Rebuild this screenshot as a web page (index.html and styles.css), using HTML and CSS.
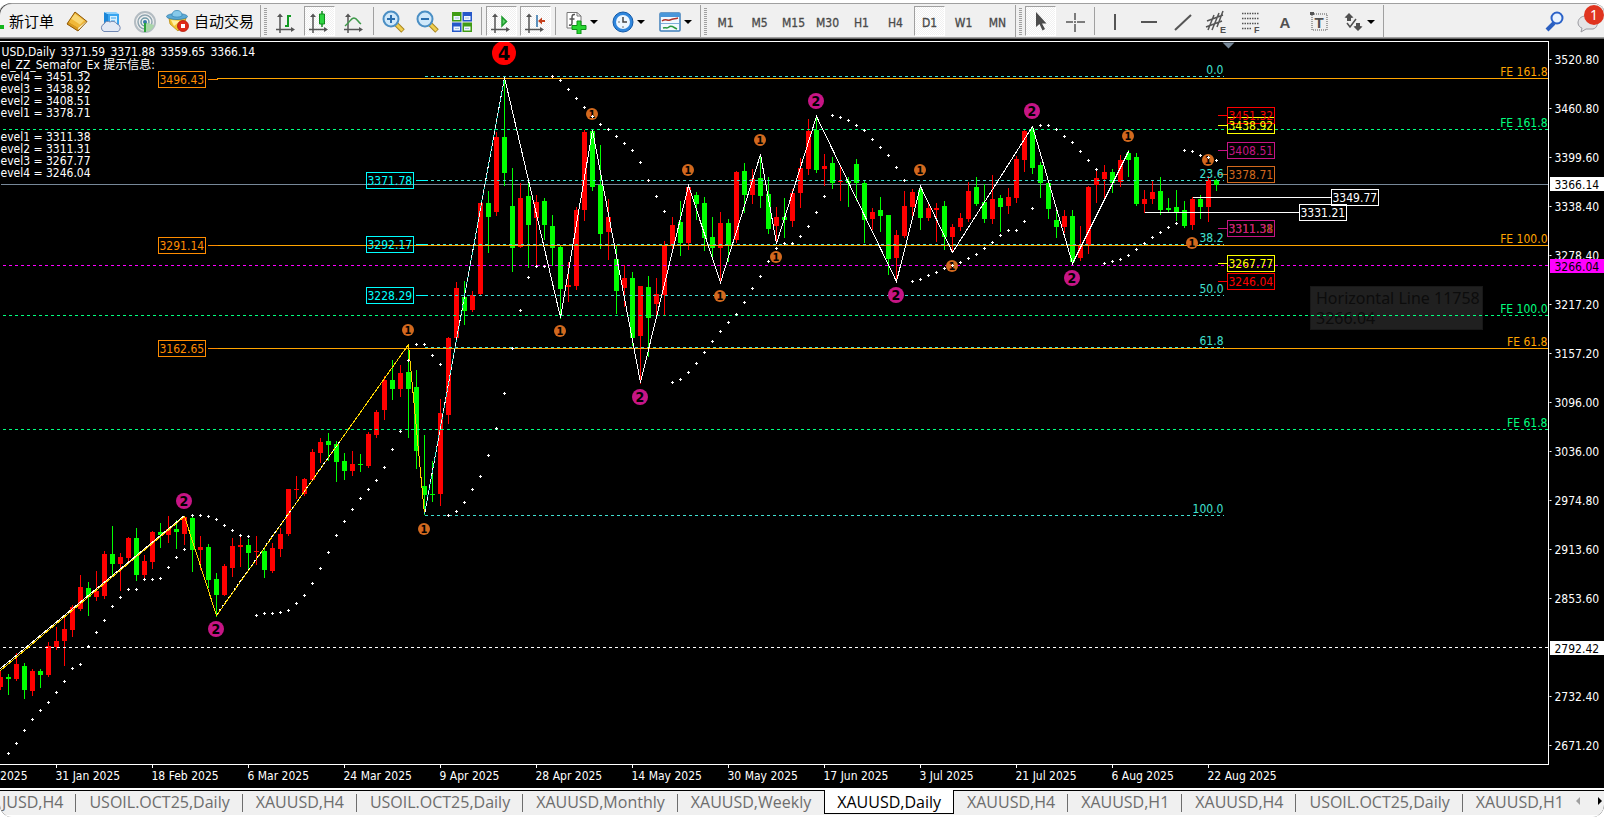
FILE: index.html
```html
<!DOCTYPE html>
<html lang="zh-CN">
<head>
<meta charset="utf-8">
<title>XAUUSD,Daily</title>
<link rel="stylesheet" href="styles.css">
</head>
<body>
<div class="app">
<header class="toolbar">
  <div class="group">
    <button class="tool neworder"><span class="plus"></span>新订单</button>
    <button class="tool" aria-label="Market watch"><svg class="ico" viewBox="0 0 24 24"><path d="M10 2 22 11.500 13 21 2 14Z" fill="#b97a12"/><path d="M10 2 21 11 13 18 3 12Z" fill="#f0b83a"/><path d="M10 4 19 10.500 15 14.500 6 8.500Z" fill="#f9d774"/><path d="M3 12 13 18 13 21 2 14Z" fill="#d99a1e"/><path d="M13 18 21 11.500 22 12.500 13.500 20Z" fill="#fff4c8"/><path d="M10 2 22 11.500 13 21 2 14Z" fill="none" stroke="#8f5a0b"/></svg></button>
    <button class="tool" aria-label="Cloud"><svg class="ico" viewBox="0 0 24 24"><path d="M5 2 9 4V15H5Z" fill="#1a86d8"/><path d="M5 2H17L20 4H9Z" fill="#8fd0fb"/><path d="M9 4H20V15H9Z" fill="#37a4ef"/><path d="M11 6H18V13H11Z" fill="#d7effd"/><path d="M12 8H17M12 11H16" stroke="#37a4ef"/><path d="M5 21.500a4 4 0 0 1 0-7.500 4 4 0 0 1 6-2 5 5 0 0 1 7 2 4 4 0 0 1 1 7.500Z" fill="#e3e9f4" stroke="#7188b3"/></svg></button>
    <button class="tool" aria-label="Signals"><svg class="ico" viewBox="0 0 24 24" fill="none"><circle cx="12" cy="12" r="10" stroke="#b3bcc2" stroke-width="2"/><circle cx="12" cy="12" r="7" stroke="#8fa5b0" stroke-width="1.500"/><circle cx="12" cy="12" r="4" stroke="#6f9aa8" stroke-width="1.500"/><path d="M12 12V22C17 21 20 19 21 15Z" fill="#a9d6a9"/><circle cx="12" cy="12" r="2" fill="#3479a8"/><path d="M12 13V22" stroke="#2ba33a" stroke-width="2"/></svg></button>
    <button class="tool auto"><svg class="ico" viewBox="0 0 24 24"><path d="M3 9H20L18 16 12 22 4 15Z" fill="#f2c531" stroke="#b98d10" stroke-width=".8"/><path d="M5 11 14 12 8 17Z" fill="#fff0a0"/><ellipse cx="11" cy="7.500" rx="10.500" ry="3" fill="#5caad6" stroke="#2f7dad" stroke-width=".8"/><path d="M6 7C6 3 8 1.500 11 1.500S16 3 16 7C14 8.500 8 8.500 6 7Z" fill="#86c9ea" stroke="#3a89b7" stroke-width=".8"/><circle cx="17" cy="17" r="5.500" fill="#df2a17" stroke="#b31d0e" stroke-width=".8"/><rect x="15" y="15" width="4" height="4" fill="#fff"/></svg>自动交易</button>
  </div>
  <div class="group">
    <i class="grip"></i>
    <button class="tool" aria-label="Bar chart"><svg class="ico" viewBox="0 0 24 24" fill="none"><path d="M6 5V23M2 19.500H19" stroke="#555" stroke-width="1.500"/><path d="M3 7 6 3.500 9 7ZM17 17 21 19.500 17 22Z" fill="#555"/><path d="M14 5V17M14 6H17M11 16H14" stroke="#119a22" stroke-width="2"/></svg></button>
    <button class="tool pressed" aria-label="Candlesticks"><svg class="ico" viewBox="0 0 24 24" fill="none"><path d="M5 5V23M1 19.500H18" stroke="#555" stroke-width="1.500"/><path d="M2 7 5 3.500 8 7ZM16 17 20 19.500 16 22Z" fill="#555"/><path d="M14 1V17" stroke="#118a1e" stroke-width="1.500"/><path d="M11.500 4H16.500V14H11.500Z" fill="#2fd541" stroke="#118a1e"/></svg></button>
    <button class="tool" aria-label="Line chart"><svg class="ico" viewBox="0 0 24 24" fill="none"><path d="M6 5V23M2 19.500H19" stroke="#555" stroke-width="1.500"/><path d="M3 7 6 3.500 9 7ZM17 17 21 19.500 17 22Z" fill="#555"/><path d="M3 16C8 12 9 8 12 8S16 12 19 14" stroke="#3f9a4a" stroke-width="1.500"/></svg></button>
    <i class="sep"></i>
    <button class="tool" aria-label="Zoom in"><svg class="ico" viewBox="0 0 24 24"><path d="M14 14 21 21" stroke="#a8841c" stroke-width="5"/><path d="M14 14 20.500 20.500" stroke="#f0cf50" stroke-width="3"/><circle cx="9" cy="9" r="7.500" fill="#cfe8fa" stroke="#4b8fc4" stroke-width="2"/><path d="M5 9H13M9 5V13" stroke="#2b6fae" stroke-width="2"/></svg></button>
    <button class="tool" aria-label="Zoom out"><svg class="ico" viewBox="0 0 24 24"><path d="M14 14 21 21" stroke="#a8841c" stroke-width="5"/><path d="M14 14 20.500 20.500" stroke="#f0cf50" stroke-width="3"/><circle cx="9" cy="9" r="7.500" fill="#cfe8fa" stroke="#4b8fc4" stroke-width="2"/><path d="M5 9H13" stroke="#2b6fae" stroke-width="2"/></svg></button>
    <i hidden></i>
    <button class="tool" aria-label="Tile windows"><svg class="ico" viewBox="0 0 24 24"><path d="M2 2H11.500V11.500H2ZM12.500 12.500H22V22H12.500Z" fill="#3f9c14"/><path d="M12.500 2H22V11.500H12.500ZM2 12.500H11.500V22H2Z" fill="#2558c9"/><path d="M3.500 6H10V10H3.500ZM14 6H20.500V10H14ZM3.500 16.500H10V20.500H3.500ZM14 16.500H20.500V20.500H14Z" fill="#eef5ff"/><path d="M5 8H9M15 8H19M5 18.500H9M15 18.500H19" stroke="#a9c4dd"/></svg></button>
    <i class="sep"></i>
    <button class="tool pressed" aria-label="Auto scroll"><svg class="ico" viewBox="0 0 24 24" fill="none"><path d="M5 5V23M1 19.500H18" stroke="#555" stroke-width="1.500"/><path d="M2 7 5 3.500 8 7ZM16 17 20 19.500 16 22Z" fill="#555"/><path d="M12 7 16.500 11.500 12 16Z" fill="#5fd36a" stroke="#1d9a2c" stroke-width="1.500"/></svg></button>
    <button class="tool pressed" aria-label="Chart shift"><svg class="ico" viewBox="0 0 24 24" fill="none"><path d="M5 5V23M1 19.500H18" stroke="#555" stroke-width="1.500"/><path d="M2 7 5 3.500 8 7ZM16 17 20 19.500 16 22Z" fill="#555"/><path d="M13 5V17" stroke="#2a6fa8" stroke-width="1.500"/><path d="M14 11 18 7.500V10H21V12H18V14.500Z" fill="#c5401c"/></svg></button>
    <i class="sep"></i>
    <button class="tool drop" aria-label="Indicators"><svg class="ico" viewBox="0 0 24 24"><path d="M3 2.500H13L17 6V18H3Z" fill="#fff" stroke="#777"/><path d="M13 2.500V6H17" fill="none" stroke="#777"/><path d="M11 4.500C8 4 8 6 8 8V13C8 15 7 15.500 5 15M5.500 9H10.500" fill="none" stroke="#555" stroke-width="1.500"/><path d="M13 11H17V15.500H22V19.500H17V24H13V19.500H8V15.500H13Z" fill="#27d631" stroke="#0d8f16"/></svg><span class="caret"></span></button>
    <button class="tool drop" aria-label="Periods"><svg class="ico" viewBox="0 0 24 24"><circle cx="12" cy="12" r="10" fill="#2f86dd" stroke="#135aa8"/><circle cx="12" cy="12" r="7" fill="#eef7ff"/><path d="M12 7V12H16" fill="none" stroke="#444" stroke-width="1.500"/><path d="M7 12H9M12 16V18" stroke="#777"/></svg><span class="caret"></span></button>
    <button class="tool drop" aria-label="Templates"><svg class="ico" viewBox="0 0 24 24"><rect x="2" y="3" width="20" height="18" rx="1" fill="#f3f9ff" stroke="#3f7fba" stroke-width="1.500"/><path d="M2 3H22V7H2Z" fill="#4a97da"/><path d="M4 11C8 8 9 11 12 10S16 9 20 8" fill="none" stroke="#b1332a" stroke-width="1.500"/><path d="M3 13.500H21" stroke="#7fb0da"/><path d="M5 18C8 17 9 19 11 17S15 17 19 19" fill="none" stroke="#2a9a3f" stroke-width="1.500"/></svg><span class="caret"></span></button>
  </div>
  <div class="group">
    <i class="grip"></i>
    <button class="tool tf">M1</button><button class="tool tf">M5</button><button class="tool tf">M15</button><button class="tool tf">M30</button><button class="tool tf">H1</button><button class="tool tf">H4</button><button class="tool tf pressed">D1</button><button class="tool tf">W1</button><button class="tool tf">MN</button>
  </div>
  <div class="group">
    <i class="grip"></i>
    <button class="tool pressed" aria-label="Cursor"><svg class="ico" viewBox="0 0 24 24"><path d="M7 2V17L10.500 14 13.500 20.500 16 19 13 13.500H17.500Z" fill="#4c4c4c"/></svg></button>
    <button class="tool" aria-label="Crosshair"><svg class="ico" viewBox="0 0 24 24"><path d="M12 3V10M12 14V22M3 12H10M14 12H22M11 12H13" stroke="#555" stroke-width="1.500"/></svg></button>
    <i class="sep"></i>
    <button class="tool" aria-label="Vertical line"><svg class="ico" viewBox="0 0 24 24"><path d="M12 4V20" stroke="#555" stroke-width="2"/></svg></button>
    <button class="tool" aria-label="Horizontal line"><svg class="ico" viewBox="0 0 24 24"><path d="M4 12H20" stroke="#555" stroke-width="2"/></svg></button>
    <button class="tool" aria-label="Trend line"><svg class="ico" viewBox="0 0 24 24"><path d="M4 20 20 5" stroke="#555" stroke-width="2"/></svg></button>
    <button class="tool" aria-label="Equidistant channel"><svg class="ico" viewBox="0 0 24 24"><path d="M2 11 18 5M1 17 17 11M3 20 9 5M7 20 14 3M12 17 18 1" stroke="#555" stroke-width="1.500"/><text x="15" y="23" class="sub">E</text></svg></button>
    <button class="tool" aria-label="Fibonacci retracement"><svg class="ico" viewBox="0 0 24 24"><path d="M3 3.500H20M3 8.500H20M3 13.500H20M3 18.500H13" stroke="#555" stroke-width="1.500" stroke-dasharray="1.500 1"/><text x="15" y="23" class="sub">F</text></svg></button>
    <button class="tool" aria-label="Text"><svg class="ico" viewBox="0 0 24 24"><text x="12" y="18" text-anchor="middle" class="letter">A</text></svg></button>
    <button class="tool" aria-label="Text label"><svg class="ico" viewBox="0 0 24 24"><rect x="5" y="4" width="15" height="16" fill="none" stroke="#555" stroke-dasharray="1 1"/><path d="M3 2H7V5H3Z" fill="#555"/><text x="12" y="18" text-anchor="middle" class="letter">T</text></svg></button>
    <button class="tool drop" aria-label="Arrows"><svg class="ico" viewBox="0 0 24 24"><path d="M8 3 12.500 7.500 10 8V11H6V8L3.500 7.500ZM17 21 12.500 16.500 15 16V13H19V16L21.500 16.500Z" fill="#505050"/><path d="M6 13 9 17 15 9" fill="none" stroke="#505050" stroke-width="1.500"/></svg><span class="caret"></span></button>
  </div>
  <div class="right">
    <button class="tool" aria-label="Search"><svg class="ico" viewBox="0 0 24 24"><path d="M3 20 10 13" stroke="#2b5fc0" stroke-width="4"/><circle cx="13" cy="8" r="5.500" fill="#e9f3ff" stroke="#2b62c8" stroke-width="2"/></svg></button>
    <button class="tool chat" aria-label="Messages"><svg class="ico" viewBox="0 0 24 24"><path d="M9 6C3 6 1 10 1 13S4 18 5 18L4 22 9 19H16C20 18 21 14 20 11S16 6 9 6Z" fill="#e4e4e6" stroke="#9a9aa0"/></svg><span class="badge">1</span></button>
  </div>
</header>

<main class="chart">
  <div class="plotbox">
    <div class="tip">Horizontal Line 11758<br>3266.04</div>
    <svg id="plot" class="plot" role="img" aria-label="XAUUSD daily chart"></svg>
  </div>
  <svg id="prices" class="prices"></svg>
  <svg id="dates" class="dates"></svg>
</main>

<nav class="tabs">
  <a href="#" class="first">JUSD,H4</a><a href="#">USOIL.OCT25,Daily</a><a href="#">XAUUSD,H4</a><a href="#">USOIL.OCT25,Daily</a><a href="#">XAUUSD,Monthly</a><a href="#" class="plain">XAUUSD,Weekly</a><a href="#" class="active">XAUUSD,Daily</a><a href="#">XAUUSD,H4</a><a href="#">XAUUSD,H1</a><a href="#">XAUUSD,H4</a><a href="#">USOIL.OCT25,Daily</a><a href="#" class="plain last">XAUUSD,H1</a>
  <span class="scroll"><button class="prev" aria-label="Previous tabs"></button><button class="next" aria-label="Next tabs"></button></span>
</nav>
</div>
<script src="chart.js"></script>
</body>
</html>
```

FILE: styles.css
```css
* { box-sizing: border-box; }
body { margin: 0; background: #fff; }
.app {
  display: flex; flex-direction: column; height: 100vh; overflow: hidden;
  border-radius: 12px; border-top: 3px solid #fff; background: #000;
}
button { font: inherit; color: inherit; border: 0; background: none; padding: 0; margin: 0; }

.toolbar {
  display: flex; flex: none; height: 36px; background: #f0f0f0;
  border-top: 1px solid #a0a0a0; border-bottom: 1px solid #696969;
  box-shadow: inset 0 -1px #a0a0a0;
  border-top-left-radius: 12px;
  font-family: "Noto Sans CJK SC", sans-serif; font-size: 15px; color: #000;
}
.group {
  display: flex; align-items: center; gap: 3px; flex: none;
  margin: 1px 0; padding: 0 2px 0 3px; border-right: 1px solid #a0a0a0;
}
.group:first-child { padding-left: 0; }
.tool {
  display: flex; align-items: center; justify-content: center;
  width: 31px; height: 30px; padding-top: 1px; border: 1px solid transparent; flex: none; white-space: nowrap;
}
.ico { width: 24px; height: 24px; flex: none; display: block; }
.neworder { width: 58px; justify-content: flex-start; gap: 5px; border-width: 1px 0; }
.neworder, .auto { line-height: 20px; padding-bottom: 1px; }
.plus { width: 4px; height: 4px; margin-top: 12px; background: #12b51e; }
.auto { width: 95px; justify-content: flex-start; padding-left: 2px; gap: 4px; }
.drop { width: 44px; justify-content: flex-start; padding-left: 3px; gap: 2px; }
.caret { border: 4px solid transparent; border-top-color: #000; border-bottom: 0; }
.pressed {
  border-color: #a0a0a0 #fff #fff #a0a0a0;
  background: repeating-conic-gradient(#fff 0 25%, #f0f0f0 0 50%) 0 0 / 2px 2px;
}
.tf { padding-top: 3px; font-family: "DejaVu Sans Condensed", "DejaVu Sans", sans-serif; font-size: 12px; color: #4a4a4a; -webkit-text-stroke: 0.3px #4a4a4a; }
.grip {
  width: 3px; height: 27px; flex: none;
  background: repeating-linear-gradient(#a0a0a0 0 1px, #f0f0f0 1px 2px);
}
.sep { width: 3px; height: 28px; flex: none; background: linear-gradient(90deg, transparent 1px, #a0a0a0 1px 2px, transparent 2px); }
.sub { font: bold 9px "Liberation Sans", sans-serif; fill: #505050; }
.letter { font: bold 15px "Liberation Sans", sans-serif; fill: #505050; }
.right { display: flex; align-items: center; margin-left: auto; gap: 2px; }
.chat { position: relative; }
.badge {
  position: absolute; right: -1px; top: -2px; width: 20px; height: 20px; border-radius: 10px;
  background: #e0341f; color: #fff; font: 14px/20px "Noto Sans", sans-serif; text-align: center;
}

.chart {
  flex: 1; min-height: 0; display: grid; margin-top: 2px;
  grid-template-columns: 1fr 55px; grid-template-rows: 1fr 23px; background: #000;
  font-family: "DejaVu Sans Condensed", "DejaVu Sans", "Noto Sans CJK SC", sans-serif;
  font-size: 12px;
}
.plotbox { position: relative; min-width: 0; min-height: 0; border: solid #fff; border-width: 1px 1px 1px 0; overflow: hidden; }
.plot { position: absolute; inset: 0; width: 100%; height: 100%; }
.prices { width: 55px; height: 100%; min-height: 0; }
.dates { width: 100%; height: 23px; grid-column: 1 / 3; }
.plot text, .prices text, .dates text { white-space: pre; }
.tip {
  position: absolute; left: 1310px; top: 244px; padding: 1px 2px 1px 5px;
  background: #202020; border: 1px solid #181818; color: #0c0c0c;
  font: 16px/20px "Noto Sans", sans-serif; white-space: nowrap;
}
.crisp { shape-rendering: crispEdges; }

.tabs {
  flex: none; display: flex; align-items: stretch; height: 29px; padding-bottom: 3px;
  border-top: 2px solid #fff; background: #f0f0f0; box-shadow: inset 0 1px #000, inset 0 -2px #fff;
  font: 16px/22px "Open Sans", sans-serif; overflow: hidden;
}
.tabs a {
  position: relative; flex: none; padding: 1px 13px 0; color: #6d6d6d; text-decoration: none; height: 24px;
}
.tabs a:not(.active):not(.plain)::after {
  content: ""; position: absolute; right: 0; top: 4px; height: 18px; width: 1px; background: #6d6d6d;
}
.tabs .first { padding-left: 2px; }
.tabs .last { padding-right: 0; }
.tabs .active { background: #fff; color: #000; padding: 1px 12px 0; border: 1px solid #000; border-width: 0 1px 1px; }
.scroll { flex: none; display: flex; align-items: center; gap: 18px; margin-left: auto; padding: 0 2px 2px 0; }
.prev, .next { width: 4px; height: 8px; border: 4px solid transparent; }
.prev { border-right-color: #a0a0a0; border-left: 0; }
.next { border-left-color: #000; border-right: 0; }
```

FILE: chart.js
```js
const NS = 'http://www.w3.org/2000/svg';
function el(parent, name, attrs, text) {
  const n = document.createElementNS(NS, name);
  for (const k in attrs) n.setAttribute(k, attrs[k]);
  if (text !== undefined) n.textContent = text;
  parent.appendChild(n);
  return n;
}

const UP = '#ff0000', DOWN = '#00ff00';
const BAR = 8;

// colour, wick top, wick bottom, body top, body bottom
const candles = `r671 689 677 687|g674 694 677 679|r653 680 664 679|g663 698 666 690|r669 695 671 691|g669 687 671 675
r642 676 646 675|r627 649 641 647|r616 665 629 641|r605 636 607 630|r575 610 587 609|g582 615 588 597|r571 600 591 597
r551 598 554 596|g526 575 554 564|r553 590 557 564|r537 560 538 558|g528 580 538 575|r555 579 561 575|r531 568 532 562
g523 547 532 535|r516 542 529 535|g520 548 529 532|r516 544 517 534|g516 571 518 550|r536 569 547 550|g544 587 547 580
g573 616 579 595|r564 595 566 595|r538 576 546 568|r536 566 545 547|g539 570 545 553|r536 564 551 552|g548 577 551 570
r543 572 548 571|r528 556 534 549|r489 535 489 534|r476 498 489 490|r478 495 479 494|r449 480 452 480|r438 462 442 453
g433 460 441 445|g441 481 444 462|g453 479 461 471|r451 475 464 471|g454 471 464 465|r432 467 434 466|r410 437 412 435
r376 419 380 410|g360 399 380 389|r365 396 373 389|g344 437 372 389|g370 468 387 451|g435 514 486 495|g461 501 494 495
r399 505 413 494|r337 423 338 415|r282 338 288 338|g281 324 297 311|r291 311 295 310|r203 295 203 294|g191 252 203 217
r132 215 137 212|g77 185 137 173|g168 271 206 248|r183 247 198 247|g182 267 196 225|r195 264 202 218|g198 239 201 225
g215 265 226 248|g246 318 247 289|r262 301 285 287|r207 289 210 286|r130 220 132 210|g129 190 131 187|g145 248 185 234
r199 259 217 232|g246 313 259 291|r265 306 278 288|g272 345 278 338|r286 383 286 336|g276 356 287 318|r278 314 294 304
r241 315 245 295|r217 248 225 245|g201 255 222 243|r185 249 187 243|g192 219 195 204|g197 250 203 238|g217 256 237 248
r212 283 223 248|g219 261 223 245|r171 242 172 240|g163 212 171 195|r169 203 179 195|g155 207 178 196|g177 233 194 229
r207 243 217 226|g198 237 217 220|r189 226 193 221|r158 207 168 193|r119 174 131 169|g116 172 130 170|r154 185 166 169
g157 188 163 183|r167 200 181 182|g177 206 181 183|g159 200 164 183|g181 242 183 220|r208 229 212 219|g197 231 210 216
g215 274 215 259|r230 281 235 258|r191 237 206 236|r189 215 192 207|g186 229 190 218|r202 220 208 218|r203 241 208 210
g201 249 206 237|r224 252 227 237|r213 230 218 227|r182 221 191 219|g177 205 187 204|g184 222 202 219|r175 223 199 219
g195 231 198 207|r188 213 197 206|r156 202 159 198|r129 171 131 160|g127 173 130 168|g162 197 165 183|g180 218 183 209
g211 237 220 227|r210 232 216 227|g210 263 216 262|r226 260 245 258|r186 253 187 245|r170 202 178 185|r165 200 172 179
g169 192 172 183|r155 186 160 182|g150 176 153 160|g153 205 157 204|r190 212 199 204|r181 203 192 199|g177 214 191 210
g198 212 208 210|g190 220 207 212|g201 227 210 226|r197 229 199 225|g195 218 199 207|r176 221 180 207|g179 190 180 185`
  .split(/[|\n]/).map(s => [s[0], ...s.slice(1).split(' ').map(Number)]);

// runs of parabolic stops: first bar index, then one y per bar
const sar = [
  [1, 753,743,730,719,710,702,692,681,668,664,646,632,620,606,597,589,589,579,579,578,567,557,549],
  [24, 515,515,516,519,525,530,535,536],
  [32, 615,613,613,612,610,603,595,583,568,552,535,521,509,498,489,480,467,449,431,360],
  [52, 344,344,355,364],
  [56, 515,511,502,489,476,455,428,393,348,310,277,266,266],
  [69, 76,80,89,98,107,116,124,129,136,143,150,162,180,196,211],
  [84, 382,379,372,363,352,341,331,322,314,302,288,276,261,248,243,243,236,226,212,196],
  [104, 115,117,120,125,130,139,147,155,167,180],
  [114, 281,279,275,272,268,265,262,258,254,248,242,235,230,230,221,208],
  [130, 125,125,129,136,142,151,160,169],
  [138, 263,261,259,255,249,243,237,232,227,223],
  [148, 150,151,155,157,160]
];

const svg = document.getElementById('plot');
const g = el(svg, 'g', { transform: 'translate(0.5 -41.5)' });
const crisp = el(g, 'g', { class: 'crisp', fill: 'none' });

function hline(x, y, color, dash, x2) {
  const a = { x1: x, x2: x2 || '100%', y1: y, y2: y, stroke: color };
  if (dash) a['stroke-dasharray'] = '3 3';
  el(crisp, 'line', a);
}

hline(0, 184, '#778899');
candles.forEach(([c, hi, lo, top, bot], i) => {
  const fill = c === 'r' ? UP : DOWN, x = i * BAR;
  el(crisp, 'line', { x1: x, x2: x, y1: hi - 0.5, y2: lo, stroke: fill });
  el(crisp, 'rect', { x: x - 2.5, y: top - 0.5, width: 5, height: Math.max(1, bot - top), fill });
});

const GREEN = '#00ff7f', TEAL = '#40e0d0', ORANGE = '#ffa500';
[129, 315, 429].forEach(y => hline(2, y, GREEN, true));
[76, 180, 244, 295, 347, 515].forEach(y => hline(424, y, TEAL, true, 1223));
hline(2, 265, '#ff00ff', true);
hline(2, 647, '#ffffff', true);
hline(216, 78, ORANGE);
hline(216, 245, ORANGE);
hline(216, 348, ORANGE);

const poly = (points, stroke, dash) =>
  el(crisp, 'polyline', dash ? { points, stroke, 'stroke-dasharray': dash } : { points, stroke });
poly('0,668 184,515', '#fff');
poly('0,670 184,516 216,615 408,344 424,514', '#ffd700');
poly('216,614 340,440', '#ffffff', '2 3');
poly('424,514 504,77', '#fff');
poly('424,514 504,77', TEAL, '3 3');
poly('504,77 560,317 592,130 640,382 688,185 720,282 760,154 776,243 816,116 896,281 920,186 952,252 1032,126 1072,263 1128,151', '#fff');

// level captions
[['0.0', 76], ['23.6', 180], ['38.2', 244], ['50.0', 295], ['61.8', 347], ['100.0', 515]]
  .forEach(([t, y]) => el(g, 'text', { x: 1223, y: y - 3, fill: TEAL, 'text-anchor': 'end' }, t));
[['FE 161.8', 78, ORANGE], ['FE 161.8', 129, GREEN], ['FE 100.0', 245, ORANGE], ['FE 100.0', 315, GREEN], ['FE 61.8', 348, ORANGE], ['FE 61.8', 429, GREEN]]
  .forEach(([t, y, c]) => el(g, 'text', { x: '100%', dx: -1, y: y - 3, fill: c, 'text-anchor': 'end' }, t));

// numbered swing markers
const marks = {
  1: [[408,330],[424,529],[592,114],[560,331],[688,170],[720,296],[760,140],[776,257],[920,170],[952,266],[1128,136],[1192,243],[1208,160]],
  2: [[184,501],[216,629],[640,397],[816,101],[896,295],[1032,111],[1072,278]],
  4: [[504,53]]
};
const style = { 1: ['#d2691e', 6, 11], 2: ['#c71585', 8, 14], 4: ['#ff0000', 12, 20] };
const badges = el(svg, 'g', { transform: 'translate(0 -42)' });
for (const k in marks) {
  const [fill, r, size] = style[k];
  marks[k].forEach(([cx, cy]) => {
    el(badges, 'circle', { cx, cy, r, fill });
    el(badges, 'text', { x: cx, y: cy + Math.round(size * 0.36), 'text-anchor': 'middle', 'font-size': size, 'font-weight': 'bold' }, k);
  });
}

const dots = el(svg, 'g', { class: 'crisp', transform: 'translate(0.5 -41.5)' });
sar.forEach(([start, ...ys]) => ys.forEach((y, k) => {
  const x = (start + k) * BAR;
  el(dots, 'path', { d: `M${x - 1.5} ${y}h3M${x} ${y - 1.5}v3`, stroke: '#fff' });
}));

// price tags: x of box, y, text, colour, connector start and end
[[158, 79, '3496.43', '#ff8c00', 207, 217], [158, 245, '3291.14', '#ff8c00', 207, 217], [158, 348, '3162.65', '#ff8c00', 207, 217],
 [366, 180, '3371.78', '#00ffff', 415, 427], [366, 244, '3292.17', '#00ffff', 415, 427], [366, 295, '3228.29', '#00ffff', 415, 427],
 [1227, 125, '3438.92', '#ffff00', 1217, 1227], [1227, 115, '3451.32', '#ff0000', 1217, 1227],
 [1227, 150, '3408.51', '#c71585', 1217, 1227], [1227, 174, '3378.71', '#d2691e', 1217, 1227],
 [1227, 228, '3311.38', '#d2691e', 1217, 1227], [1227, 228, '3311.31', '#c71585', 1217, 1227],
 [1227, 263, '3267.77', '#ffff00', 1217, 1227], [1227, 281, '3246.04', '#ff0000', 1217, 1227],
 [1331, 197, '3349.77', '#ffffff', 1192, 1331], [1299, 212, '3331.21', '#ffffff', 1144, 1299]
].forEach(([x, y, t, c, a, b]) => {
  hline(a, y, c, false, b);
  el(crisp, 'rect', { x, y: y - 8, width: 47, height: 16, stroke: c });
  el(g, 'text', { x: x + 1, y: y + 4, fill: c }, t);
});

// symbol line and indicator comment
el(g, 'text', { x: 1, y: 55, fill: '#fff' }, 'USD,Daily');
[[60, '3371.59'], [110, '3371.88'], [160, '3359.65'], [210, '3366.14']]
  .forEach(([x, t]) => el(g, 'text', { x, y: 55, fill: '#fff' }, t));
['el_ZZ_Semafor_Ex 提示信息:', 'evel4 = 3451.32', 'evel3 = 3438.92', 'evel2 = 3408.51', 'evel1 = 3378.71', '',
 'evel1 = 3311.38', 'evel2 = 3311.31', 'evel3 = 3267.77', 'evel4 = 3246.04']
  .forEach((t, i) => el(g, 'text', { x: 0, y: 68 + 12 * i, fill: '#fff' }, t));

el(g, 'path', { d: 'M1222 42H1234L1228 48Z', fill: '#778899' });

// price scale
const ps = el(document.getElementById('prices'), 'g', { transform: 'translate(0.5 -40.5)' });
['3520.80', '3460.80', '3399.60', '3338.40', '3278.40', '3217.20', '3157.20', '3096.00', '3036.00', '2974.80', '2913.60', '2853.60', '', '2732.40', '2671.20']
  .forEach((t, i) => {
    const y = 59 + 49 * i;
    if (!t) return;
    el(ps, 'line', { x1: 0, x2: 2, y1: y, y2: y, stroke: '#fff' });
    el(ps, 'text', { x: 5, y: y + 4, fill: '#fff' }, t);
  });
[['3366.14', 184, '#fff'], ['3266.04', 266, '#ff00ff'], ['2792.42', 648, '#fff']].forEach(([t, y, c]) => {
  el(ps, 'rect', { x: 0.5, y: y - 7.5, width: 54, height: 14, fill: c });
  el(ps, 'text', { x: 5, y: y + 4, fill: '#000' }, t);
});

// time scale
const ts = el(document.getElementById('dates'), 'g', { transform: 'translate(0.5 0)' });
el(ts, 'text', { x: 27, y: 15, fill: '#fff', 'text-anchor': 'end' }, '2025');
['31 Jan', '18 Feb', '6 Mar', '24 Mar', '9 Apr', '28 Apr', '14 May', '30 May', '17 Jun', '3 Jul', '21 Jul', '6 Aug', '22 Aug']
  .forEach((t, i) => {
    const x = 56 + 96 * i;
    el(ts, 'line', { x1: x, x2: x, y1: 0, y2: 3, stroke: '#fff' });
    el(ts, 'text', { x: x - 1, y: 15, fill: '#fff' }, t + ' 2025');
  });
```
